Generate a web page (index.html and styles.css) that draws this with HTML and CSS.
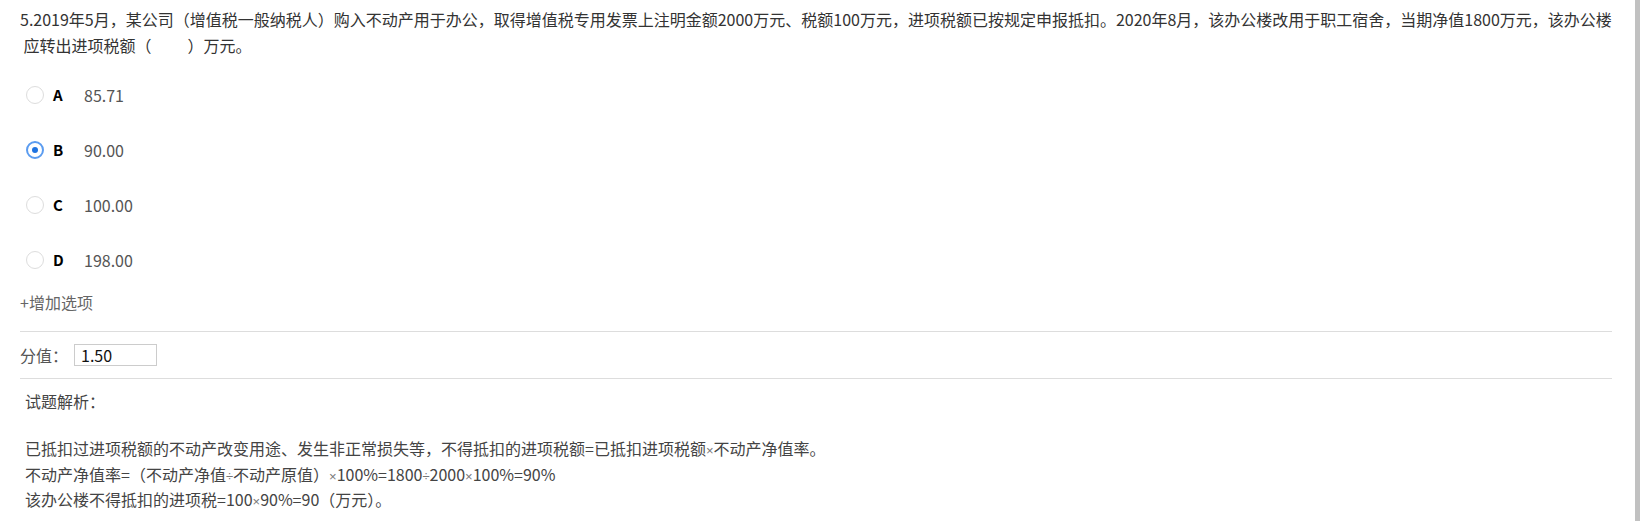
FILE: index.html
```html
<!DOCTYPE html>
<html lang="zh-CN">
<head>
  <meta charset="UTF-8" />
  <meta name="viewport" content="width=device-width, initial-scale=1.0" />
  <title>试题编辑</title>
  <link rel="stylesheet" href="styles.css">
</head>
<body>

<div class="page">
  <main class="question">
    <p class="stem">5.2019年5月，某公司（增值税一般纳税人）购入不动产用于办公，取得增值税专用发票上注明金额2000万元、税额100万元，进项税额已按规定申报抵扣。2020年8月，该办公楼改用于职工宿舍，当期净值1800万元，该办公楼<br>&nbsp;应转出进项税额（&nbsp;&nbsp;&nbsp;&nbsp;&nbsp;&nbsp;&nbsp;&nbsp;&nbsp;&nbsp;）万元。</p>

    <ul class="options">
      <li class="option"><span class="radio"></span><span class="letter">A</span><span class="value">85.71</span></li>
      <li class="option"><span class="radio checked"></span><span class="letter">B</span><span class="value">90.00</span></li>
      <li class="option"><span class="radio"></span><span class="letter">C</span><span class="value">100.00</span></li>
      <li class="option"><span class="radio"></span><span class="letter">D</span><span class="value">198.00</span></li>
    </ul>

    <div class="add-option">+增加选项</div>

    <div class="score-row">
      <label for="score">分值：</label>
      <input id="score" class="score-input" type="text" value="1.50">
    </div>

    <div class="analysis">
      <p>试题解析：</p>
      <p>&nbsp;</p>
      <p>已抵扣过进项税额的不动产改变用途、发生非正常损失等，不得抵扣的进项税额=已抵扣进项税额<span class="op">×</span>不动产净值率。</p>
      <p>不动产净值率=（不动产净值<span class="op">÷</span>不动产原值）<span class="op">×</span>100%=1800<span class="op">÷</span>2000<span class="op">×</span>100%=90%</p>
      <p>该办公楼不得抵扣的进项税=100<span class="op">×</span>90%=90（万元）。</p>
    </div>
  </main>

  <div class="scrollbar"></div>
</div>

</body>
</html>
```

FILE: styles.css
```css
* {
  box-sizing: border-box;
  margin: 0;
  padding: 0;
}

body {
  font-family: "Noto Sans CJK SC", sans-serif;
  font-size: 16px;
  color: #444;
  background: #fff;
}

.page {
  display: flex;
  min-height: 521px;
}

.question {
  flex: 1;
  padding: 6px 23px 0 20px;
}

.stem {
  line-height: 26px;
  color: #333;
}

.options {
  list-style: none;
  margin-top: 9px;
}

.option {
  display: flex;
  align-items: center;
  height: 55px;
  padding-left: 6px;
}

.radio {
  width: 18px;
  height: 18px;
  border: 1px solid #ddd;
  border-radius: 50%;
  margin-right: 9px;
  display: flex;
  align-items: center;
  justify-content: center;
}

.radio.checked {
  border: 2px solid #5b9cf0;
}

.radio.checked::after {
  content: "";
  width: 6px;
  height: 6px;
  border-radius: 50%;
  background: #1f73e0;
}

.letter {
  width: 31px;
  font-size: 15px;
  font-weight: bold;
  color: #000;
}

.value {
  color: #555;
}

.add-option {
  line-height: 30px;
  padding-bottom: 14px;
  color: #666;
  border-bottom: 1px solid #ddd;
}

.score-row {
  display: flex;
  align-items: center;
  height: 47px;
  border-bottom: 1px solid #ddd;
  color: #555;
}

.score-row label {
  width: 54px;
}

.score-input {
  width: 83px;
  height: 22px;
  border: 1px solid #ccc;
  padding: 0 6px;
  font-family: "Noto Sans CJK SC", sans-serif;
  font-size: 16px;
  color: #111;
  outline: none;
}

.analysis {
  padding: 11px 0 0 5px;
  line-height: 23.5px;
  color: #444;
}

.op {
  font-family: "Liberation Sans", sans-serif;
  font-size: 13px;
  color: #777;
}

.scrollbar {
  width: 5px;
  background: #c1c1c1;
}
```
